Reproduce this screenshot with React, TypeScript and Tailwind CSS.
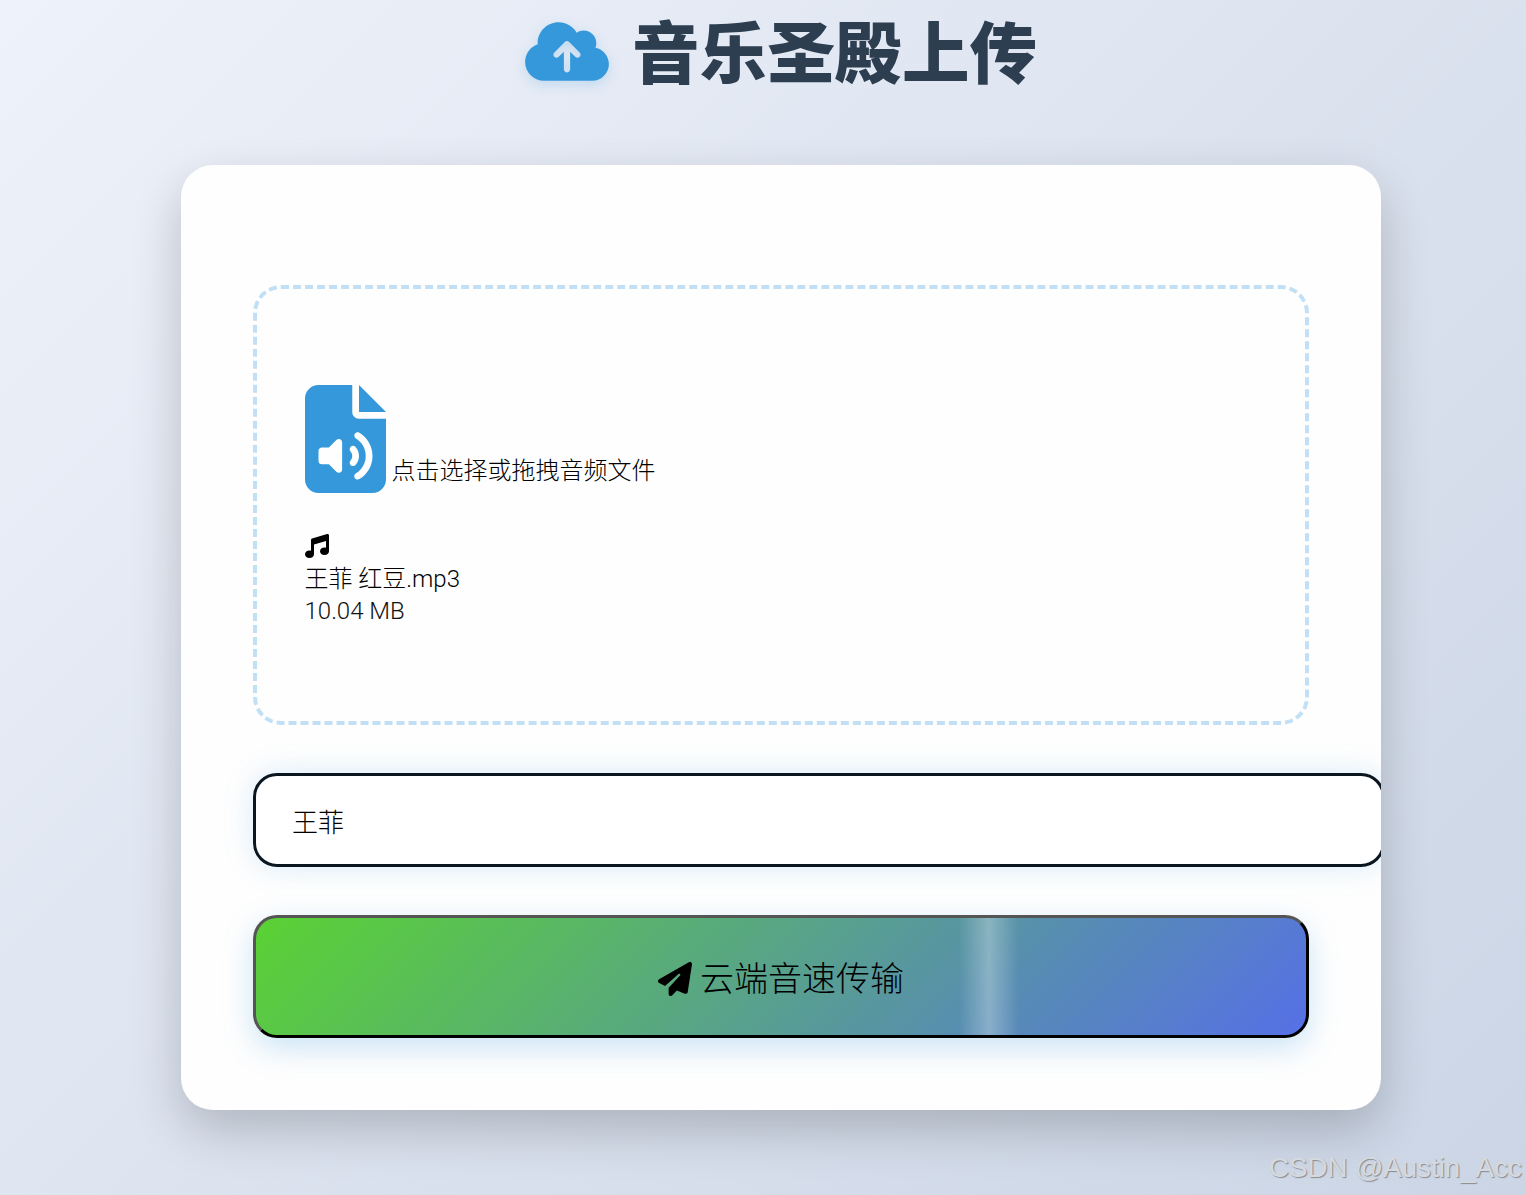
import { FaCloudArrowUp, FaFileAudio, FaMusic, FaPaperPlane } from 'react-icons/fa6'

export default function App() {
  return (
    <div className="relative h-[1195px] overflow-hidden bg-[linear-gradient(135deg,#eef2fa_0%,#cbd5e5_100%)] font-['Roboto','Noto_Sans_CJK_SC',sans-serif] text-black">
      <div className="ml-[181px] w-[1200px]">
        <h1 className="flex h-[106px] items-center justify-center gap-[23px] pt-[4px] text-[67.5px] leading-none font-black text-[#2c3e50]">
          <FaCloudArrowUp className="mb-[8px] h-[67px] w-[84px] text-[#3498db] drop-shadow-[0_4px_6px_rgba(52,152,219,0.2)]" />
          <span>音乐圣殿上传</span>
        </h1>

        <div className="mt-[59px] overflow-hidden rounded-[32px] bg-[#fefefe] px-[72px] pt-[120px] pb-[72px] shadow-[0_20px_50px_rgba(0,0,0,0.2)]">
          <div className="rounded-[28px] border-4 border-dashed border-[#c2e0f5] pt-[96px] pr-[48px] pb-[94px] pl-[47.5px]">
            <div className="flex items-end gap-[6px]">
              <FaFileAudio className="h-[108px] w-[81px] text-[#3498db]" />
              <span className="mb-[6px] text-[24px] leading-[32px] font-light">点击选择或拖拽音频文件</span>
            </div>
            <FaMusic className="mt-[41px] h-[24px] w-[24px]" />
            <div className="mt-[5px] text-[24px] leading-[32px] font-light">王菲 红豆.mp3</div>
            <div className="text-[24px] leading-[32px] font-light text-[#111]">10.04 MB</div>
          </div>

          <input
            readOnly
            value="王菲"
            className="mt-[48px] box-border block h-[94px] w-[1132px] max-w-none rounded-[24px] border-[3px] border-[#0b1720] bg-white pl-[36px] text-[26px] font-light shadow-[0_0_30px_rgba(52,152,219,0.18)] outline-none"
          />

          <button className="relative mt-[48px] flex h-[123px] w-full items-center justify-center gap-[8px] overflow-hidden rounded-[24px] border-[3px] border-t-[#555] border-r-black border-b-black border-l-[#555] bg-[linear-gradient(135deg,#5ad233_0%,#5670e6_100%)] pt-[5px] text-[34px] font-light shadow-[0_10px_30px_rgba(52,152,219,0.25)]">
            <FaPaperPlane className="h-[34px] w-[34px]" />
            <span>云端音速传输</span>
            <span className="absolute inset-y-0 left-[703px] w-[60px] bg-[linear-gradient(90deg,transparent,rgba(255,255,255,0.3),transparent)]" />
          </button>
        </div>
      </div>

      <div className="absolute top-[1150px] left-[1269px] font-['Liberation_Sans',sans-serif] text-[27.7px] leading-[36px] whitespace-nowrap text-[#d6d9de] [text-shadow:1px_1px_1px_rgba(90,90,90,0.6)]">
        CSDN @Austin_Acc
      </div>
    </div>
  )
}
